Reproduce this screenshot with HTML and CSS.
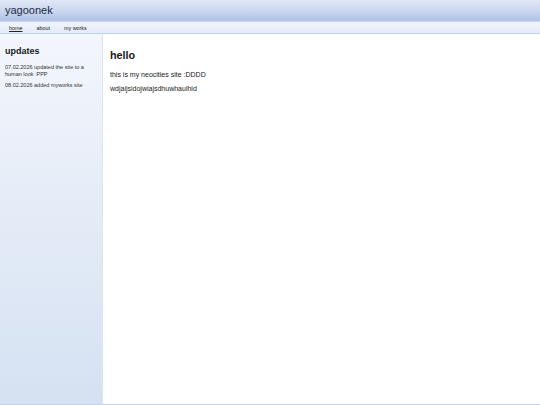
FILE: index.html
```html
<!DOCTYPE html>
<html>
<head>
<meta charset="utf-8">
<link rel="stylesheet" href="styles.css">
</head>
<body>
<div class="page">
  <header class="header">yagoonek</header>
  <nav class="nav">
    <a class="nav-link active" href="#">home</a>
    <a class="nav-link" href="#">about</a>
    <a class="nav-link" href="#">my works</a>
  </nav>
  <div class="layout">
    <aside class="sidebar">
      <h2 class="side-title">updates</h2>
      <p class="side-item">07.02.2026 updated the site to a human look :PPP</p>
      <p class="side-item">08.02.2026 added myworks site</p>
    </aside>
    <main class="main">
      <h1 class="main-title">hello</h1>
      <p class="main-text">this is my neocities site :DDDD</p>
      <p class="main-text">wdjaijsidojwiajsdhuwhaulhid</p>
    </main>
  </div>
</div>
</body>
</html>
```
FILE: styles.css
```css
html, body {
  margin: 0;
  padding: 0;
  height: 100%;
}
body {
  font-family: "Liberation Sans", Arial, sans-serif;
  color: #222;
  background: #fff;
}
.page {
  display: flex;
  flex-direction: column;
  height: 405px;
  box-sizing: border-box;
  border-bottom: 1px solid #c3d2ee;
}
.header {
  height: 22px;
  box-sizing: border-box;
  padding: 4px 0 0 5px;
  font-size: 11px;
  line-height: 13px;
  color: #1d2a44;
  background: linear-gradient(#e2e9f6, #b0c4e8);
  border-bottom: 1px solid #c9d6ef;
}
.nav {
  height: 12px;
  box-sizing: border-box;
  display: flex;
  padding: 0 0 0 9px;
  align-items: center;
  background: linear-gradient(#f0f4fc, #e4ebf8);
  border-bottom: 1px solid #c3d2ee;
}
.nav-link {
  font-size: 5.4px;
  color: #222;
  text-decoration: none;
  margin-right: 14px;
}
.nav-link.active {
  text-decoration: underline;
}
.layout {
  flex: 1;
  display: flex;
}
.sidebar {
  width: 103px;
  box-sizing: border-box;
  padding: 12px 5px 0 5px;
  background: linear-gradient(#f3f6fc, #d5e1f2);
  border-right: 1px solid #dbe4f3;
}
.side-title {
  margin: 0 0 8px;
  font-size: 9px;
  font-weight: bold;
  color: #1a1a1a;
}
.side-item {
  margin: 0 0 4.5px;
  font-size: 5.5px;
  line-height: 6.6px;
  color: #333;
}
.main {
  flex: 1;
  padding: 15px 7px 0;
}
.main-title {
  margin: 0 0 10px;
  font-size: 10.8px;
  font-weight: bold;
  color: #1a1a1a;
}
.main-text {
  margin: 0 0 6px;
  font-size: 7px;
  line-height: 8px;
  color: #222;
}
```
